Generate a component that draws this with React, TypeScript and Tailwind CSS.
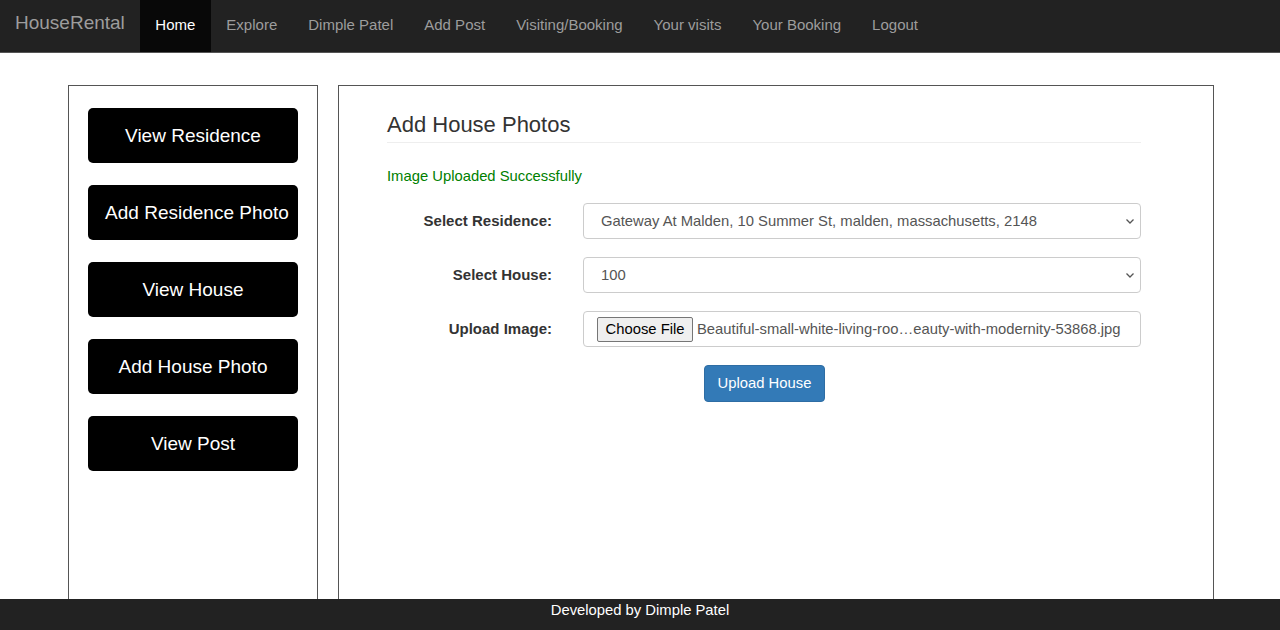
import React from 'react';

const navLinks = ['Explore', 'Dimple Patel', 'Add Post', 'Visiting/Booking', 'Your visits', 'Your Booking', 'Logout'];
const sideButtons = [
  { label: 'View Residence', pad: '' },
  { label: 'Add Residence Photo', pad: 'pl-[8px]' },
  { label: 'View House', pad: '' },
  { label: 'Add House Photo', pad: '' },
  { label: 'View Post', pad: '' },
];

const Chevron = () => (
  <svg width="10" height="10" viewBox="0 0 10 10" className="text-[#555]">
    <path d="M1.5 3.5 L5 7 L8.5 3.5" fill="none" stroke="currentColor" strokeWidth="1.3" />
  </svg>
);

export default function App() {
  return (
    <div className="min-h-[630px] bg-white text-[#333] font-['Liberation_Sans',Arial,sans-serif]">
      <nav className="h-[53px] bg-[#222] border-b border-[#555] flex">
        <span className="px-[15px] pt-[13px] text-[19px] leading-[20px] text-[#9d9d9d]">HouseRental</span>
        <span className="px-[15.5px] pt-[15px] text-[15px] leading-[20px] text-white bg-[#080808]">Home</span>
        {navLinks.map((l) => (
          <span key={l} className="px-[15.5px] pt-[15px] text-[15px] leading-[20px] text-[#9d9d9d]">
            {l}
          </span>
        ))}
      </nav>

      <div className="flex gap-[20px] pl-[68px] pt-[32px]">
        <aside className="w-[250px] h-[540px] border border-[#555] pt-[22px] px-[19px] flex flex-col gap-[22px]">
          {sideButtons.map((b) => (
            <button
              key={b.label}
              className={`h-[55px] w-[210px] pt-[2px] rounded-[5px] bg-black text-white text-[19px] whitespace-nowrap ${b.pad}`}
            >
              {b.label}
            </button>
          ))}
        </aside>

        <main className="w-[876px] h-[540px] border border-[#555] pl-[48px] pt-[25px]">
          <div className="w-[754px]">
            <h2 className="text-[22px] leading-[28px] pb-[3px] border-b border-[#eee]">Add House Photos</h2>
            <p className="mt-[23px] text-[14.8px] leading-[20px] text-[#008000]">Image Uploaded Successfully</p>

            <div className="mt-[17px] flex flex-col gap-[18px]">
              <div className="flex items-center">
                <label className="w-[165px] text-right text-[15px] font-bold">Select Residence:</label>
                <div className="ml-[31px] w-[558px] h-[36px] border border-[#ccc] rounded-[4px] flex items-center justify-between pl-[17px] pr-[5px] text-[14.8px] text-[#555]">
                  <span>Gateway At Malden, 10 Summer St, malden, massachusetts, 2148</span>
                  <Chevron />
                </div>
              </div>
              <div className="flex items-center">
                <label className="w-[165px] text-right text-[15px] font-bold">Select House:</label>
                <div className="ml-[31px] w-[558px] h-[36px] border border-[#ccc] rounded-[4px] flex items-center justify-between pl-[17px] pr-[5px] text-[14.8px] text-[#555]">
                  <span>100</span>
                  <Chevron />
                </div>
              </div>
              <div className="flex items-center">
                <label className="w-[165px] text-right text-[15px] font-bold">Upload Image:</label>
                <div className="ml-[31px] w-[558px] h-[36px] border border-[#ccc] rounded-[4px] flex items-center pl-[13px] text-[14.8px] text-[#555]">
                  <span className="h-[25px] w-[96px] text-center whitespace-nowrap border border-[#767676] rounded-[2px] bg-[#efefef] text-black leading-[23px]">
                    Choose File
                  </span>
                  <span className="ml-[4px] whitespace-nowrap">Beautiful-small-white-living-roo…eauty-with-modernity-53868.jpg</span>
                </div>
              </div>
            </div>

            <button className="mt-[18px] ml-[317px] w-[121px] h-[37px] rounded-[4px] bg-[#337ab7] border border-[#2e6da4] text-white text-[14.8px]">
              Upload House
            </button>
          </div>
        </main>
      </div>

      <footer className="fixed bottom-0 left-0 right-0 h-[31px] bg-[#222] text-white text-center text-[14.8px] leading-[20px] pt-[1px]">
        Developed by Dimple Patel
      </footer>
    </div>
  );
}
